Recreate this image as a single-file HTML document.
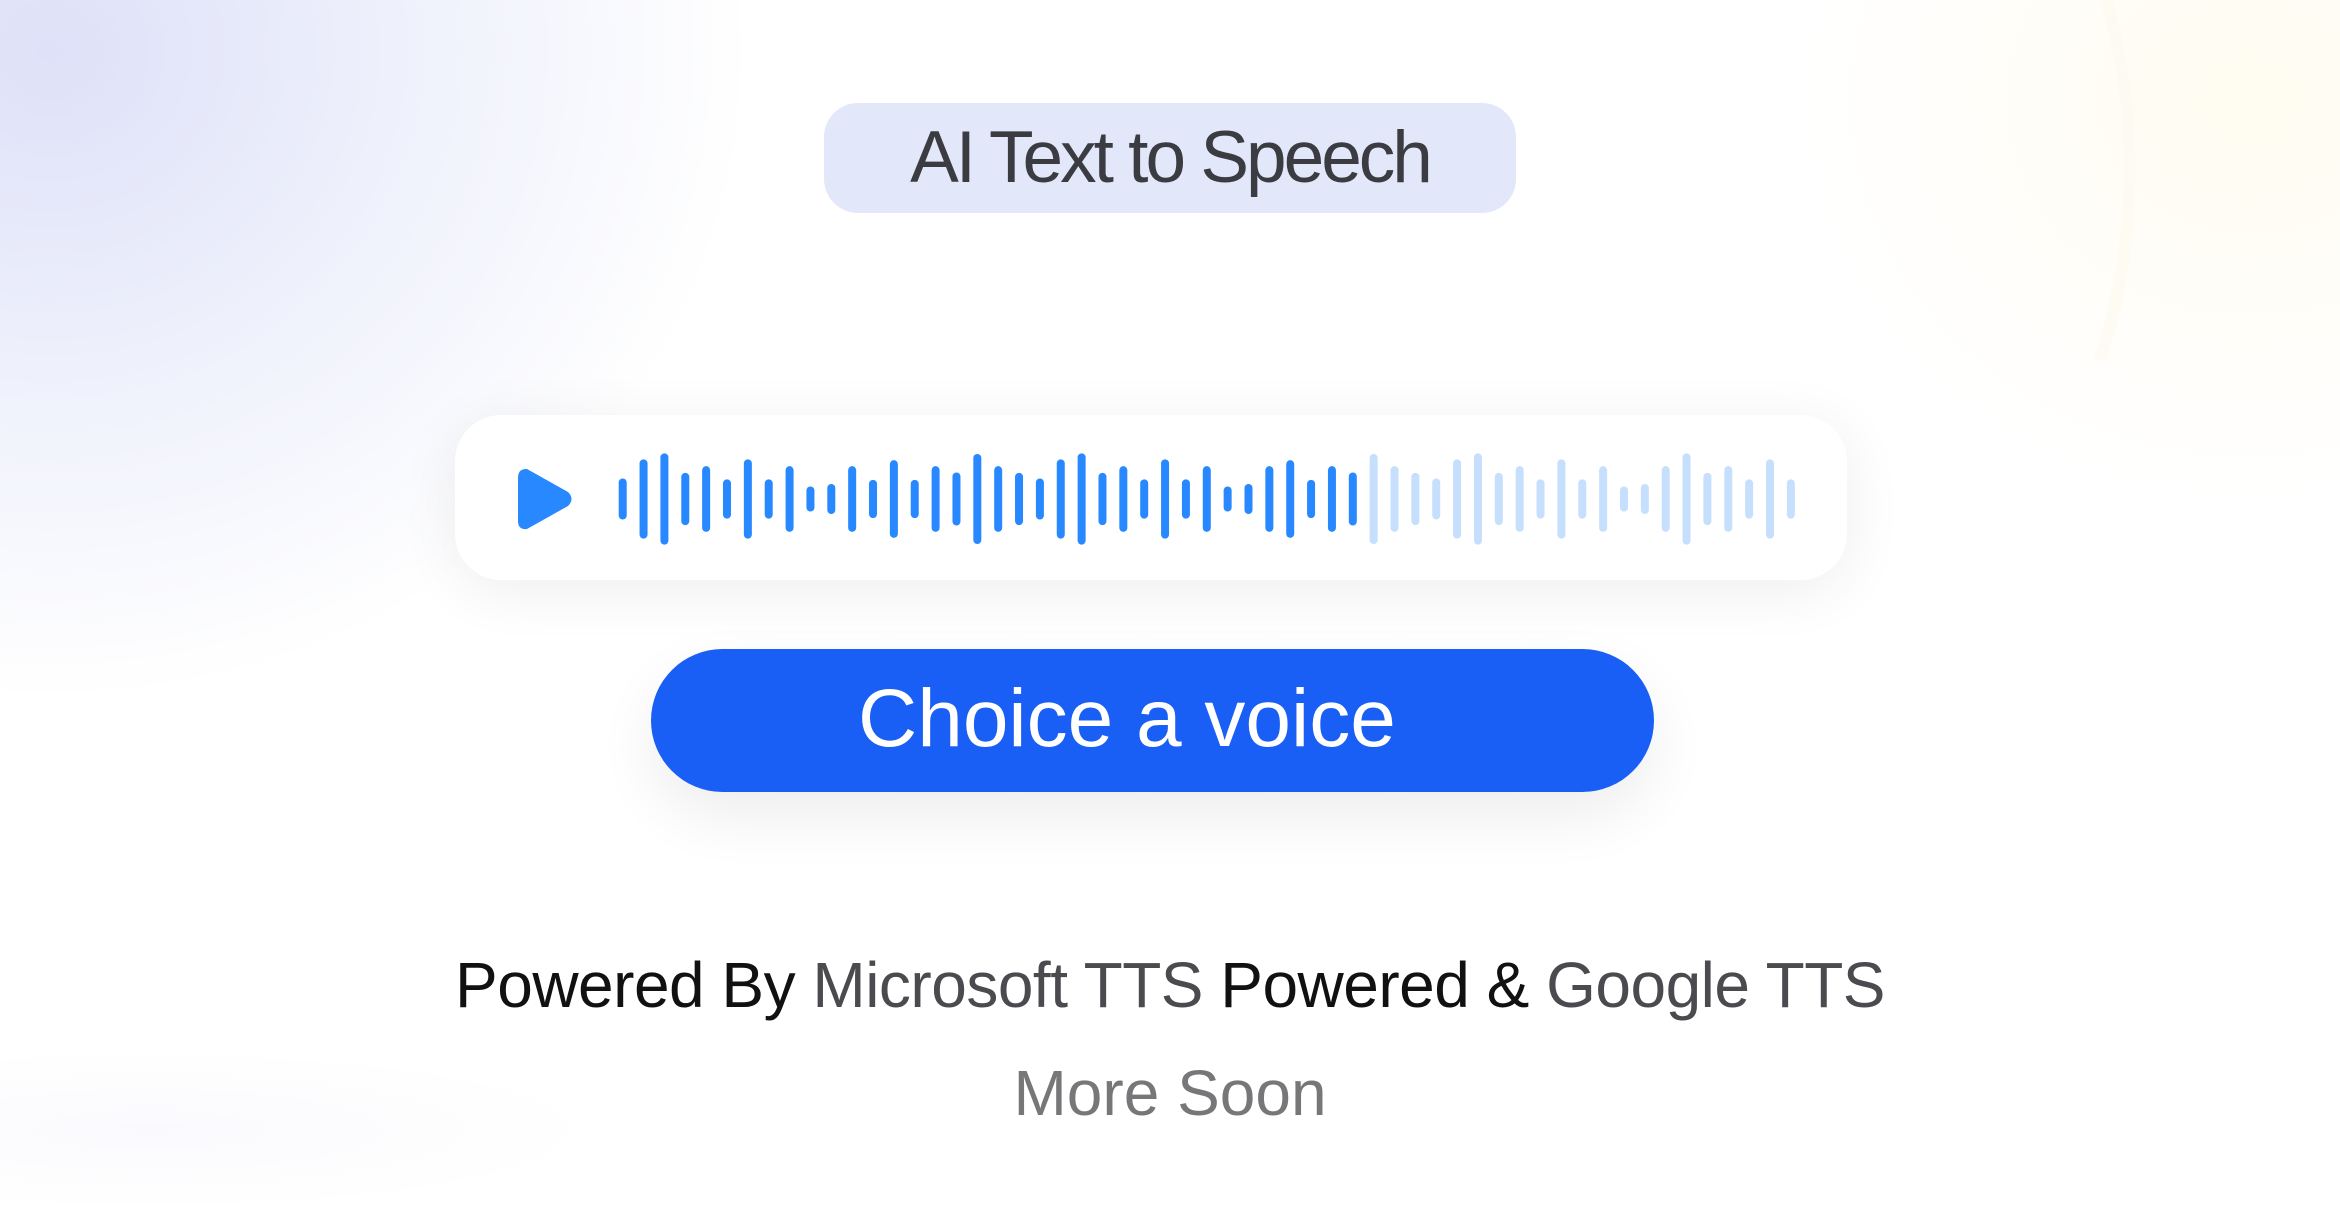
<!DOCTYPE html>
<html><head><meta charset="utf-8"><style>
html,body{margin:0;padding:0;width:2340px;height:1215px;overflow:hidden}
body{position:relative;background:#fff;font-family:"Liberation Sans",sans-serif}
.bgw{position:absolute;left:0;top:0;width:2340px;height:1215px;overflow:hidden}
.bg1{position:absolute;left:-650px;top:-600px;width:1400px;height:1300px;border-radius:50%;background:radial-gradient(closest-side,rgba(222,225,248,1),rgba(230,233,250,0.6) 55%,rgba(255,255,255,0) 100%)}
.bg2{position:absolute;left:1800px;top:-300px;width:900px;height:800px;border-radius:50%;background:radial-gradient(closest-side,rgba(255,250,235,0.7),rgba(255,255,255,0))}
.bg3{position:absolute;left:-300px;top:1050px;width:900px;height:160px;border-radius:50%;background:radial-gradient(closest-side,rgba(247,246,253,0.6),rgba(255,255,255,0))}
.pill{position:absolute;left:824px;top:103px;width:692px;height:110px;border-radius:34px;background:#e3e7fa;text-align:center;line-height:110px;font-size:73px;color:#3a3c42;letter-spacing:-3px}
.card{position:absolute;left:455px;top:415px;width:1392px;height:165px;border-radius:46px;background:#fff;box-shadow:0 10px 60px rgba(0,0,0,0.07)}
.btn{position:absolute;left:651px;top:649px;width:1003px;height:143px;border-radius:72px;background:#1a5ff5;color:#fff;line-height:140px;font-size:82px;box-shadow:0 25px 60px rgba(0,0,0,0.07)}
.btn span{position:absolute;left:207px;top:0}
.p1{position:absolute;left:0;width:2340px;top:948px;height:80px;text-align:center;font-size:64px;color:#111;letter-spacing:-0.5px}
.p1 span{color:#4a4a4f}
.p2{position:absolute;left:0;width:2340px;top:1056px;height:80px;text-align:center;font-size:64px;color:#77777a}
</style></head><body>
<div class="bgw"><div class="bg1"></div><div class="bg2"></div><div class="bg3"></div>
<svg style="position:absolute;left:0;top:0" width="2340" height="1215"><path d="M2100 -20 A 620 620 0 0 1 2100 360" fill="none" stroke="rgba(252,250,240,0.7)" stroke-width="12"/></svg></div>
<div class="pill">AI Text to Speech</div>
<div class="card"></div>
<svg style="position:absolute;left:0;top:0" width="2340" height="1215" id="w">
<path d="M526 469 Q518 469 518 478 L518 521 Q518 530 527 529 L568 506 Q575 499 568 492 L527 469 Z" fill="#2788ff"/>
</svg>
<div class="btn"><span>Choice a voice</span></div>
<div class="p1">Powered By <span>Microsoft TTS</span> Powered &amp; <span>Google TTS</span></div>
<div class="p2">More Soon</div>
<script>
var h=[123,238,274,157,197,118,238,118,197,75,90,197,115,233,115,197,159,270,197,157,123,238,274,157,197,118,238,118,197,75,90,197,233,115,197,159,
270,197,157,123,238,274,157,197,118,238,118,197,75,90,197,274,157,197,118,238,118];
var s=document.getElementById('w'),o='';
for(var i=0;i<h.length;i++){var x=622.7+i*20.86,hh=h[i]/3;o+='<rect x="'+(x-4)+'" y="'+(499-hh/2)+'" width="8" height="'+hh+'" rx="4" fill="'+(i<36?'#2788ff':'#c5dffd')+'"/>';}
s.insertAdjacentHTML('beforeend',o);
</script>
</body></html>
